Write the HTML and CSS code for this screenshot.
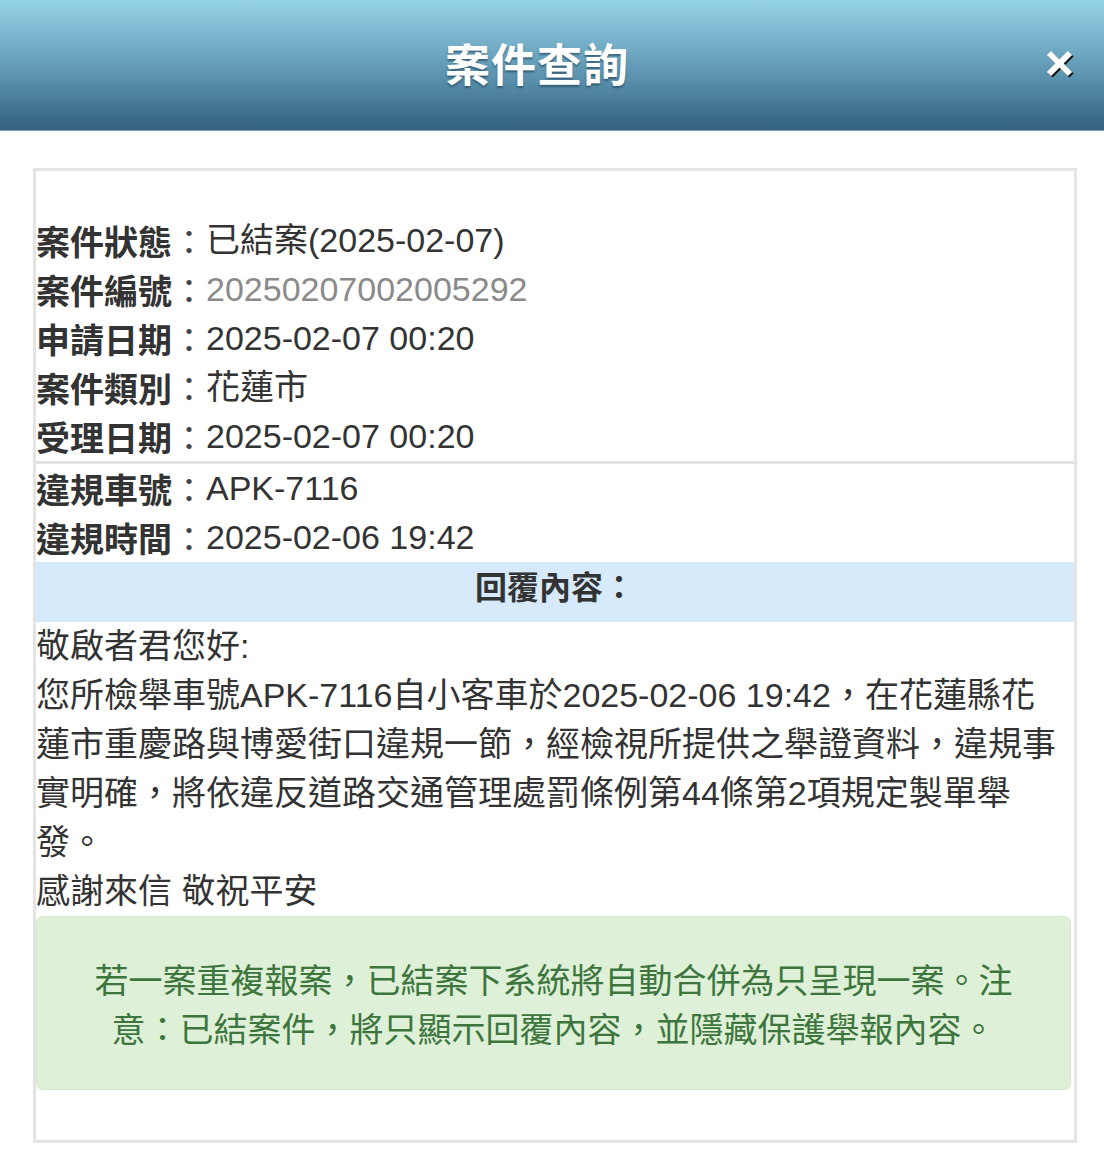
FILE: index.html
```html
<!DOCTYPE html>
<html lang="zh-Hant">
<head>
<meta charset="utf-8">
<title>案件查詢</title>
<link rel="stylesheet" href="styles.css">
</head>
<body>
<header class="topbar">
  <h1 class="topbar-title">案件查詢</h1>
  <button class="close-btn" aria-label="關閉">
    <svg viewBox="0 0 30 30" width="30" height="30">
      <g stroke="#111" stroke-width="6" stroke-linecap="butt" transform="translate(1.5,1.5)">
        <line x1="4" y1="4" x2="25" y2="25"/>
        <line x1="25" y1="4" x2="4" y2="25"/>
      </g>
      <g stroke="#fff" stroke-width="6" stroke-linecap="butt">
        <line x1="4" y1="4" x2="25" y2="25"/>
        <line x1="25" y1="4" x2="4" y2="25"/>
      </g>
    </svg>
  </button>
</header>

<main class="case-box">
  <section class="info info-first">
    <div class="row"><span class="label">案件狀態</span><span class="colon">：</span><span class="value">已結案(2025-02-07)</span></div>
    <div class="row"><span class="label">案件編號</span><span class="colon">：</span><span class="value value-muted">20250207002005292</span></div>
    <div class="row"><span class="label">申請日期</span><span class="colon">：</span><span class="value">2025-02-07 00:20</span></div>
    <div class="row"><span class="label">案件類別</span><span class="colon">：</span><span class="value">花蓮市</span></div>
    <div class="row"><span class="label">受理日期</span><span class="colon">：</span><span class="value">2025-02-07 00:20</span></div>
  </section>
  <section class="info info-second">
    <div class="row"><span class="label">違規車號</span><span class="colon">：</span><span class="value">APK-7116</span></div>
    <div class="row"><span class="label">違規時間</span><span class="colon">：</span><span class="value">2025-02-06 19:42</span></div>
  </section>
  <div class="reply-head">回覆內容：</div>
  <div class="reply-body">
    <p>敬啟者君您好:</p>
    <p class="reply-main">您所檢舉車號APK-7116自小客車於2025-02-06 19:42，在花蓮縣花蓮市重慶路與博愛街口違規一節，經檢視所提供之舉證資料，違規事實明確，將依違反道路交通管理處罰條例第44條第2項規定製單舉發。</p>
    <p>感謝來信 敬祝平安</p>
  </div>
  <div class="notice">若一案重複報案，已結案下系統將自動合併為只呈現一案。注意：已結案件，將只顯示回覆內容，並隱藏保護舉報內容。</div>
</main>
</body>
</html>
```

FILE: styles.css
```css
* {
  box-sizing: border-box;
}

html, body {
  margin: 0;
  padding: 0;
  background: #ffffff;
}

body {
  font-family: "Liberation Sans", "Noto Sans CJK TC", sans-serif;
  color: #333333;
  width: 1104px;
}

.topbar {
  position: relative;
  height: 131px;
  background: linear-gradient(to bottom, #96d4e8 0%, #78b3cb 30%, #5a91ad 60%, #33607f 100%);
  border-bottom: 1px solid #7f9cb0;
  display: flex;
  align-items: center;
  justify-content: center;
  padding-right: 30px;
  padding-bottom: 5px;
}

.topbar-title {
  margin: 0;
  font-family: "Noto Sans CJK TC", sans-serif;
  font-size: 45px;
  font-weight: 700;
  color: #ffffff;
  letter-spacing: 1px;
  text-shadow: 0 2px 2px rgba(20, 50, 70, 0.55);
  line-height: 1;
}

.close-btn {
  position: absolute;
  right: 29px;
  top: 49px;
  width: 30px;
  height: 30px;
  padding: 0;
  border: 0;
  background: transparent;
}

.close-btn svg {
  display: block;
}

.case-box {
  margin: 37px 26px 0 33px;
  width: 1044px;
  border: 3px solid #e4e4e4;
  padding-bottom: 50px;
}

.info {
  font-size: 34px;
  line-height: 49px;
}

.info-first {
  padding-top: 45px;
  border-bottom: 3px solid #e2e2e2;
}

.row {
  display: flex;
  white-space: nowrap;
}

.label {
  font-family: "Noto Sans CJK TC", sans-serif;
  font-weight: 700;
  color: #333333;
}

.colon {
  font-family: "Noto Sans CJK TC", sans-serif;
  color: #444444;
}

.value {
  color: #333333;
}

.value-muted {
  color: #8a8a8a;
}

.reply-head {
  background: #d6eafb;
  font-family: "Noto Sans CJK TC", sans-serif;
  font-size: 32px;
  font-weight: 700;
  text-align: center;
  line-height: 46px;
  padding-bottom: 14px;
  color: #333333;
}

.reply-body {
  font-size: 34px;
  line-height: 49px;
  padding-right: 7px;
}

.reply-body p {
  margin: 0;
}

.notice {
  margin-right: 3px;
  background: #dff0d8;
  border: 1px solid #d3e8c8;
  border-radius: 7px;
  color: #3c763d;
  font-family: "Noto Sans CJK TC", sans-serif;
  font-size: 34px;
  line-height: 49px;
  text-align: center;
  padding: 37px 45px;
}
```
